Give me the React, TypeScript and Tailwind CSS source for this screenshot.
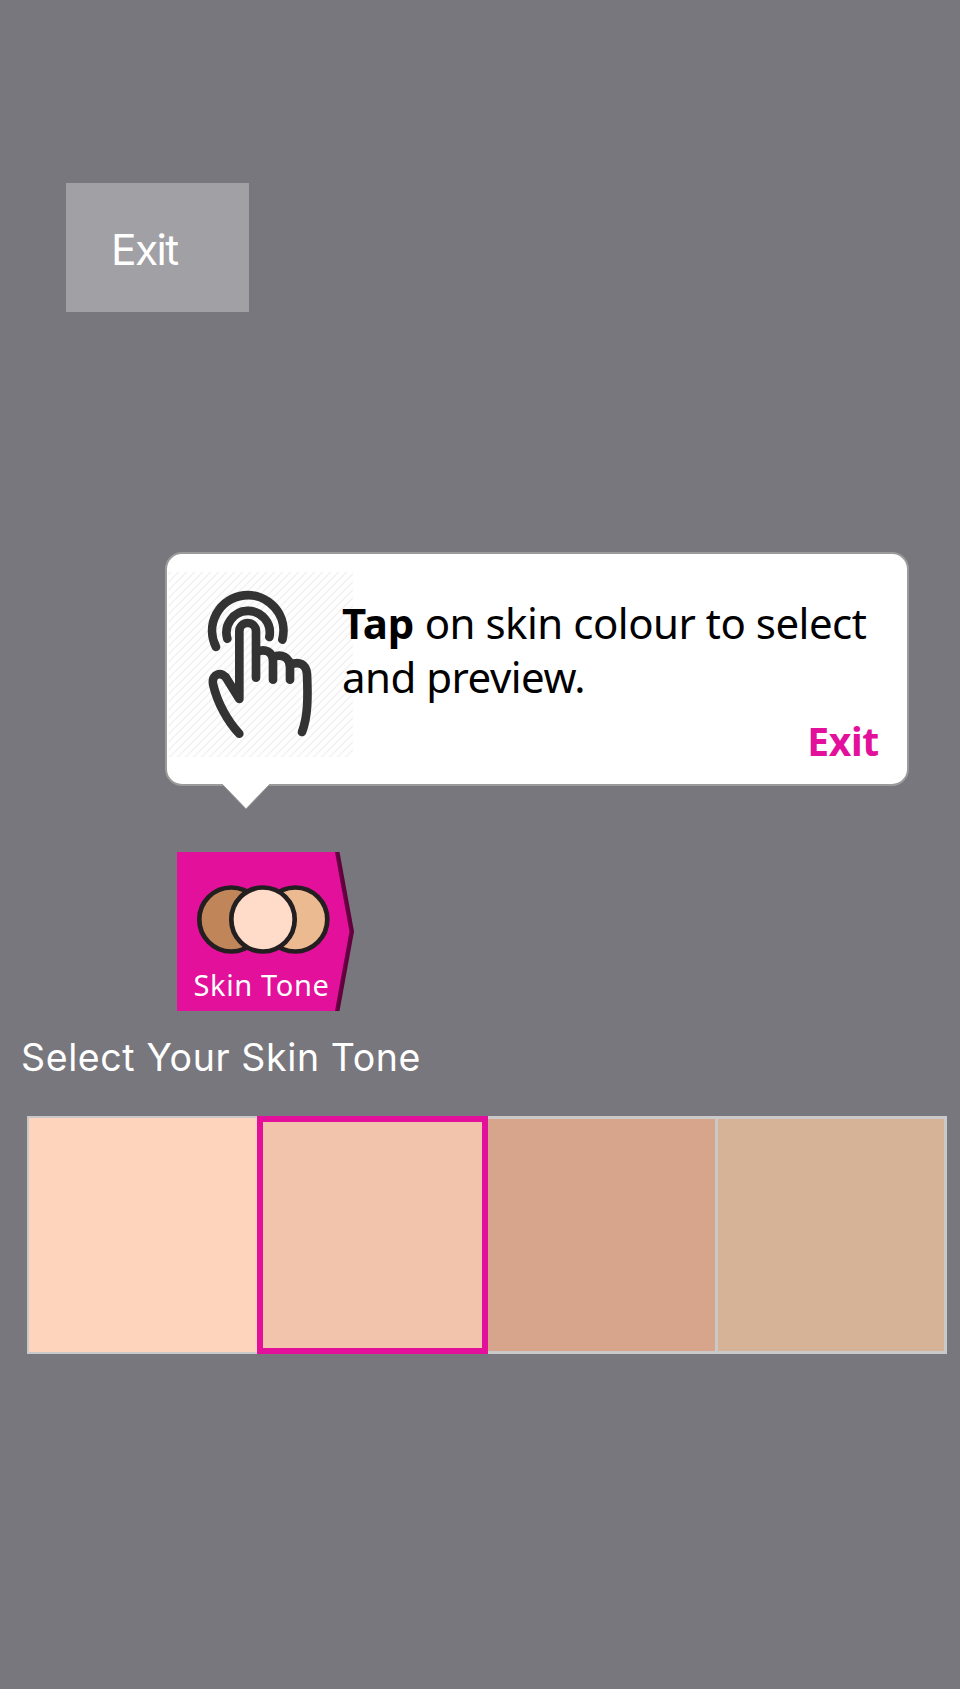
const swatches = [
  { color: "bg-[#ffd4bd]", frame: "border-[#c9c9c9] border-t-2 border-b-2 border-l-2", width: "w-[229.5px]" },
  { color: "bg-[#f2c4ac]", frame: "border-[#e2109b] border-6", width: "w-[231.5px]" },
  { color: "bg-[#d7a58b]", frame: "border-[#c9c9c9] border-y-[3px]", width: "w-[227px]" },
  { color: "bg-[#d6b396]", frame: "border-[#c9c9c9] border-[3px]", width: "w-[232px]" },
];

function TapIcon() {
  return (
    <svg width="187" height="187" viewBox="33 94 561 561" className="block">
      <defs>
        <pattern id="hatch" width="24" height="24" patternUnits="userSpaceOnUse">
          <path d="M-6 6L6 -6M-2 26L26 -2M18 30L30 18" stroke="#ededed" strokeWidth="3.6" />
        </pattern>
      </defs>
      <rect x="40" y="96" width="554" height="556" fill="url(#hatch)" />
      <g fill="none" stroke="#333333" strokeWidth="26" strokeLinecap="round" strokeLinejoin="round" transform="translate(0 -1)">
        <path d="M183 323A107 107 0 1 1 382 301" />
        <path d="M217 298A65 65 0 1 1 343 293" />
        <path d="M303 415V276A25 25 0 0 0 253 276V479L217 421C203 393 166 402 175 438C187 489 218 547 253 583" />
        <path d="M306 338C330 326 354 337 354 367V421" />
        <path d="M354 354C378 342 405 352 405 384V421" />
        <path d="M405 377C432 364 454 374 456 404C459 472 459 532 441 578" />
      </g>
    </svg>
  );
}

function Tooltip() {
  return (
    <div className="relative ml-[165px] mt-[240px] h-[234px] w-[744px] rounded-[17px] border-2 border-[#9b9b9b] bg-white">
      <div className="flex pt-[17px]">
        <div className="w-[175px] shrink-0">
          <div className="-ml-px w-[187px]">
            <TapIcon />
          </div>
        </div>
        <div className="relative flex flex-1 flex-col">
          <p className="pt-[25px] text-[42px] leading-[54px] tracking-[-0.5px] text-black">
            <strong className="tracking-[-0.1px]">Tap</strong> on skin colour to select
            <br />
            and preview.
          </p>
          <button className="mt-[10px] self-end pr-[28px] text-[39px] leading-[54px] font-bold tracking-[-0.3px] text-[#e2109b]">
            Exit
          </button>
        </div>
      </div>
      <svg width="50" height="26" viewBox="0 0 50 26" className="absolute top-[230px] left-[53.5px]">
        <path d="M2 0V1L25 24.5L48 1V0Z" fill="#fff" />
        <path d="M2 1L25 25L48 1" fill="none" stroke="#9b9b9b" />
      </svg>
    </div>
  );
}

function SkinToneTab() {
  return (
    <div className="mt-[66px] ml-[177px] grid h-[159px] w-[178px]">
      <svg width="178" height="159" viewBox="0 0 178 159" className="col-start-1 row-start-1">
        <path d="M150 0H162.500L177 79.500L162.500 159H150Z" fill="#64003f" />
        <path d="M0 0H158L172.500 79.500L158 159H0Z" fill="#e2109b" />
        <g stroke="#231f20" strokeWidth="4.700">
          <circle cx="54.300" cy="67.500" r="32" fill="#c1855a" />
          <circle cx="118.300" cy="67.500" r="32" fill="#ecba90" />
          <ellipse cx="86" cy="67.500" rx="31.700" ry="32" fill="#ffdcc9" />
        </g>
      </svg>
      <span className="col-start-1 row-start-1 self-end pb-[6px] pl-[16.5px] text-[29px] leading-[40px] tracking-[0.65px] text-white">
        Skin Tone
      </span>
    </div>
  );
}

export default function App() {
  return (
    <main className="flex h-[1689px] w-[960px] flex-col overflow-hidden bg-[#78777d] font-['Noto_Sans',sans-serif]">
      <button className="mt-[183px] ml-[66px] h-[129px] w-[183px] shrink-0 bg-[#a1a0a5] pt-[5px] pl-[45px] text-left font-['Inter',sans-serif] text-[42.5px] tracking-[-1.6px] text-white">
        Exit
      </button>
      <Tooltip />
      <SkinToneTab />
      <h1 className="mt-[20px] ml-[21px] font-['Inter',sans-serif] text-[37.5px] leading-[54px] tracking-[0.61px] text-white">
        Select Your Skin Tone
      </h1>
      <div className="mt-[31px] ml-[27px] flex h-[238px]">
        {swatches.map((s) => (
          <div key={s.color} className={`${s.color} ${s.frame} ${s.width} shrink-0`} />
        ))}
      </div>
    </main>
  );
}
